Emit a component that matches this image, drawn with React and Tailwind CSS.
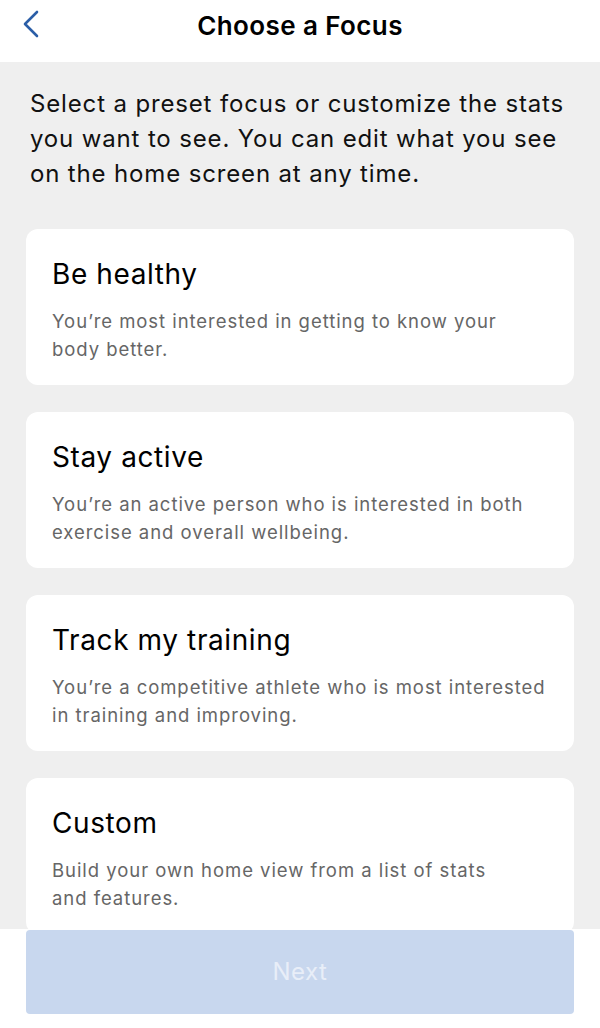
import React from 'react'

// lines broken where the app breaks them
const focuses = [
  {
    title: 'Be healthy',
    lines: ['You’re most interested in getting to know your', 'body better.'],
  },
  {
    title: 'Stay active',
    lines: ['You’re an active person who is interested in both', 'exercise and overall wellbeing.'],
  },
  {
    title: 'Track my training',
    lines: ['You’re a competitive athlete who is most interested', 'in training and improving.'],
  },
  {
    title: 'Custom',
    lines: ['Build your own home view from a list of stats', 'and features.'],
  },
]

const FocusCard = ({ title, lines }) => (
  <button className="w-full shrink-0 rounded-xl bg-white pl-[26px] pr-[10px] pt-[28px] pb-[22px] text-left">
    <p className="text-[28px] leading-[34px] tracking-[0.6px] text-black">{title}</p>
    <p className="mt-[16px] text-[18.5px] leading-[28px] tracking-[0.95px] whitespace-nowrap text-[#666666]">
      {lines[0]}
      <br />
      {lines[1]}
    </p>
  </button>
)

const App = () => {
  return (
    <div
      className="flex h-[1028px] w-[600px] flex-col overflow-hidden bg-[#efefef]"
      style={{ fontFamily: 'Inter, "Noto Sans", sans-serif' }}
    >
      {/* Header */}
      <div className="relative flex h-[62px] shrink-0 justify-center bg-white pt-[8px]">
        <button className="absolute left-[18px] top-[6px] p-1" title="Back">
          <svg width="18" height="28" viewBox="0 0 18 28" fill="none">
            <path
              d="M15 2 L3 14 L15 26"
              stroke="#2b5ea7"
              strokeWidth="2.6"
              strokeLinecap="round"
              strokeLinejoin="round"
            />
          </svg>
        </button>
        <h1 className="text-[26px] leading-[36px] font-semibold tracking-[0.4px] text-black">
          Choose a Focus
        </h1>
      </div>

      {/* Content */}
      <div className="flex min-h-0 flex-1 flex-col overflow-hidden px-[26px]">
        <p className="px-[4px] pt-[24px] text-[24px] leading-[35px] tracking-[0.85px] text-[#111111]">
          Select a preset focus or customize the stats you want to see. You can edit what you see
          on the home screen at any time.
        </p>
        <div className="mt-[38px] flex flex-col gap-[27px]">
          {focuses.map((f) => (
            <FocusCard key={f.title} {...f} />
          ))}
        </div>
      </div>

      {/* Footer */}
      <div className="shrink-0 bg-white px-[26px] pt-[1px] pb-[14px]">
        <button className="flex h-[84px] w-full items-center justify-center rounded-[4px] bg-[#c8d7ee] text-[24px] tracking-[0.5px] text-[#e8eef8]">
          Next
        </button>
      </div>
    </div>
  )
}

export default App
